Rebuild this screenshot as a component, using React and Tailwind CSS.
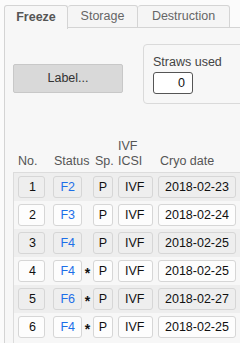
import React from 'react';

const rows = [
  { no: 1, status: 'F2', star: false, sp: 'P', ivf: 'IVF', date: '2018-02-23' },
  { no: 2, status: 'F3', star: false, sp: 'P', ivf: 'IVF', date: '2018-02-24' },
  { no: 3, status: 'F4', star: false, sp: 'P', ivf: 'IVF', date: '2018-02-25' },
  { no: 4, status: 'F4', star: true, sp: 'P', ivf: 'IVF', date: '2018-02-25' },
  { no: 5, status: 'F6', star: true, sp: 'P', ivf: 'IVF', date: '2018-02-27' },
  { no: 6, status: 'F4', star: true, sp: 'P', ivf: 'IVF', date: '2018-02-25' },
];

function Cell({ className, children }) {
  return (
    <div className={`h-[22px] shrink-0 flex items-center border border-[#d6d6d6] rounded-[3px] ${className}`}>
      {children}
    </div>
  );
}

export default function App() {
  return (
    <div className="w-[240px] h-[343px] overflow-hidden bg-[#fbfbfb] flex flex-col font-['Liberation_Sans',Arial,sans-serif] text-[12.5px] text-[#111]">
      {/* tabs */}
      <div className="flex items-end pl-[4px] pt-[4px] h-[28px] shrink-0">
        <div className="w-[64px] h-[24px] shrink-0 flex items-center justify-center border border-b-0 border-[#d4d4d4] rounded-t-[3px] bg-[#f7f7f7] font-bold text-[#555] relative z-10 -mb-px">
          Freeze
        </div>
        <div className="w-[70px] h-[23px] shrink-0 flex items-center justify-center border border-l-0 border-[#d4d4d4] rounded-t-[3px] bg-[#f5f5f5] text-[#666]">
          Storage
        </div>
        <div className="w-[92px] h-[23px] shrink-0 flex items-center justify-center border border-l-0 border-[#d4d4d4] rounded-t-[3px] bg-[#f5f5f5] text-[#666]">
          Destruction
        </div>
        <div className="flex-1 border-b border-[#d4d4d4]" />
      </div>

      {/* panel */}
      <div className="ml-[4px] flex-1 border-l border-[#d4d4d4] bg-[#f7f7f7] flex flex-col">
        <div className="flex items-start pt-[16px]">
          <button className="shrink-0 ml-[8px] mt-[20px] w-[110px] h-[29px] bg-[#d9d9d9] border border-[#c8c8c8] rounded-[2px] text-[#333]">
            Label...
          </button>
          <div className="shrink-0 ml-[20px] w-[120px] h-[60px] border border-[#dadada] rounded-[4px] pl-[9px] pt-[9px] flex flex-col">
            <span className="text-[#444] leading-[16px]">Straws used</span>
            <div className="mt-[2px] w-[40px] h-[22px] bg-white border border-[#555] rounded-[3px] flex items-center justify-end pr-[7px] text-[#111]">
              0
            </div>
          </div>
        </div>

        {/* headers */}
        <div className="mt-[35px] h-[33px] flex items-end text-[#555] leading-[15px] pb-[3px]">
          <span className="ml-[13px] w-[36px] shrink-0">No.</span>
          <span className="w-[41px] shrink-0">Status</span>
          <span className="w-[23px] shrink-0">Sp.</span>
          <span className="w-[42px] shrink-0 flex flex-col">
            <span>IVF</span>
            <span>ICSI</span>
          </span>
          <span>Cryo date</span>
        </div>

        {/* table */}
        <div className="ml-[8px] border-t border-l border-[#dcdcdc] flex-1 flex flex-col">
          {rows.map((r, i) => {
            const cellBg = i % 2 === 0 ? 'bg-[#eeeeee]' : 'bg-[#fdfdfd]';
            return (
              <div
                key={r.no}
                className={`h-[28px] shrink-0 flex items-center pl-[4px] ${i % 2 === 0 ? 'bg-[#eeeeee]' : 'bg-[#f7f7f7]'}`}
              >
                <Cell className={`w-[27px] justify-end pr-[8px] ${cellBg}`}>{r.no}</Cell>
                <Cell className={`ml-[8px] w-[29px] justify-end pr-[6px] text-[#1d6fe8] ${cellBg}`}>{r.status}</Cell>
                <span className="w-[11px] shrink-0 text-center font-bold text-[14px] leading-none pt-[3px]">
                  {r.star ? '*' : ''}
                </span>
                <Cell className={`w-[20px] justify-center ${cellBg}`}>{r.sp}</Cell>
                <Cell className={`ml-[5px] w-[35px] pl-[6px] ${cellBg}`}>{r.ivf}</Cell>
                <Cell className={`ml-[5px] w-[78px] pl-[6px] ${cellBg}`}>{r.date}</Cell>
              </div>
            );
          })}
        </div>
      </div>
    </div>
  );
}
